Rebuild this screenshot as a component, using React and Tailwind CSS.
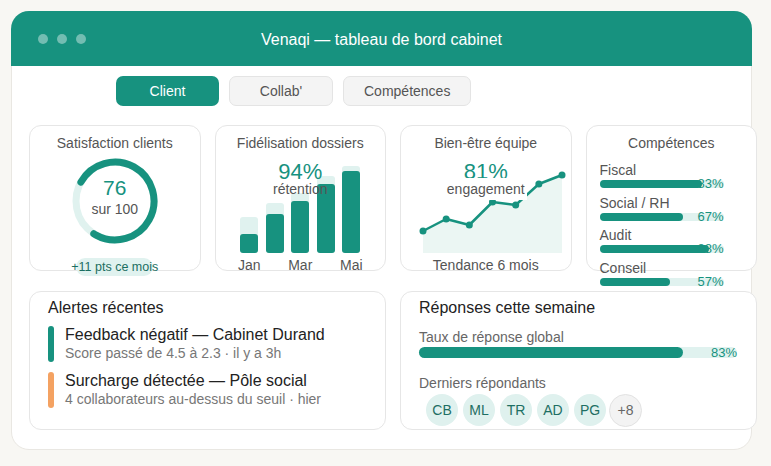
import React from 'react';

const bars = [
  { track: 36, fill: 19 },
  { track: 50, fill: 39 },
  { track: 60, fill: 52 },
  { track: 77, fill: 69 },
  { track: 87, fill: 82 },
];
const months = ['Jan', '', 'Mar', '', 'Mai'];
const skills = [
  ['Fiscal', 83],
  ['Social / RH', 67],
  ['Audit', 88],
  ['Conseil', 57],
];
const trend = [80, 68, 74, 51, 54, 33, 24];
const people = ['CB', 'ML', 'TR', 'AD', 'PG'];

const card = 'relative rounded-[12px] border border-[#e6e6e6] bg-white';
const title = 'h-[16px] shrink-0 text-[14px] leading-[16px] text-[#555] whitespace-nowrap';

function Donut() {
  const r = 39;
  const c = 2 * Math.PI * r;
  return (
    <div className="relative mt-[7px] h-[86px] w-[86px] shrink-0">
      <svg width="86" height="86" viewBox="0 0 86 86">
        <circle cx="43" cy="43" r={r} fill="none" stroke="#e0f2ef" strokeWidth="7" />
        <circle
          cx="43"
          cy="43"
          r={r}
          fill="none"
          stroke="#17927f"
          strokeWidth="7"
          strokeLinecap="round"
          strokeDasharray={`${c * 0.76} ${c}`}
          transform="rotate(209 43 43)"
        />
      </svg>
      <div className="absolute inset-x-0 top-[19px] flex flex-col items-center">
        <span className="text-[21px] leading-[22px] text-[#17927f]">76</span>
        <span className="text-[14px] leading-[20px] text-[#555]">sur 100</span>
      </div>
    </div>
  );
}

function Trend() {
  const xs = trend.map((_, i) => 22 + i * 23.17);
  const pts = trend.map((y, i) => `${xs[i]},${y}`).join(' ');
  const area = `${xs[0]},102 ${pts} ${xs[xs.length - 1]},102`;
  return (
    <svg width="169" height="104" viewBox="0 0 169 104" className="shrink-0 self-start">
      <polygon points={area} fill="#ebf6f3" />
      <polyline points={pts} fill="none" stroke="#17927f" strokeWidth="2.5" strokeLinejoin="round" />
      {trend.map((y, i) => (
        <circle key={i} cx={xs[i]} cy={y} r="3.5" fill="#17927f" />
      ))}
    </svg>
  );
}

export default function App() {
  return (
    <div className="min-h-screen bg-[#f8f7f3] pl-[11px] pt-[11px] font-['Liberation_Sans',Arial,sans-serif]">
      <div className="h-[439px] w-[741px] rounded-[18px] border border-[#e9e7e2] bg-white">
        <header className="-mx-px -mt-px grid h-[55px] grid-cols-[1fr_auto_1fr] items-center rounded-t-[18px] bg-[#17927f] px-[27px]">
          <div className="flex gap-[9px]">
            <span className="h-[10px] w-[10px] rounded-full bg-white/40" />
            <span className="h-[10px] w-[10px] rounded-full bg-white/40" />
            <span className="h-[10px] w-[10px] rounded-full bg-white/40" />
          </div>
          <h1 className="pt-[2px] text-[16px] text-white">Venaqi — tableau de bord cabinet</h1>
          <div />
        </header>

        <div className="pl-[17px]">
          <nav className="ml-[87px] mt-[10px] flex gap-[10px] text-[14px]">
            <button className="h-[30px] min-w-[103px] rounded-[7px] bg-[#17927f] px-5 text-white">Client</button>
            <button className="h-[30px] min-w-[104px] rounded-[7px] border border-[#e4e4e4] bg-[#f4f4f4] px-5 text-[#555]">Collab'</button>
            <button className="h-[30px] min-w-[103px] rounded-[7px] border border-[#e4e4e4] bg-[#f4f4f4] px-5 text-[#555]">Compétences</button>
          </nav>

          <div className="mt-[19px] grid w-[728px] grid-cols-4 gap-[14px]">
            <div className={`${card} flex h-[146px] flex-col items-center pt-[9px]`}>
              <div className={title}>Satisfaction clients</div>
              <Donut />
              <div className="mt-[14px] flex h-[18px] w-[77px] shrink-0 items-center justify-center rounded-full bg-[#e0f2ef]">
                <span className="whitespace-nowrap text-[12.5px] text-[#1b6e61]">+11 pts ce mois</span>
              </div>
            </div>

            <div className={`${card} flex h-[146px] flex-col items-center pt-[9px]`}>
              <div className={title}>Fidélisation dossiers</div>
              <div className="flex h-[102px] shrink-0 items-end gap-[7.5px]">
                {bars.map((b, i) => (
                  <div key={i} className="relative w-[18px] rounded-[3px] bg-[#e0f2ef]" style={{ height: b.track }}>
                    <div className="absolute inset-x-0 bottom-0 rounded-[3px] bg-[#17927f]" style={{ height: b.fill }} />
                  </div>
                ))}
              </div>
              <div className="mt-[4px] flex gap-[7.5px]">
                {months.map((m, i) => (
                  <div key={i} className="flex w-[18px] justify-center">
                    <span className="whitespace-nowrap text-[14px] leading-[16px] text-[#555]">{m}</span>
                  </div>
                ))}
              </div>
              <div className="absolute inset-x-0 top-[33px] flex flex-col items-center">
                <span className="text-[22px] leading-[25px] text-[#17927f]">94%</span>
                <span className="-mt-[3px] text-[14px] leading-[16px] text-[#555]">rétention</span>
              </div>
            </div>

            <div className={`${card} flex h-[146px] flex-col items-center pt-[9px]`}>
              <div className={title}>Bien-être équipe</div>
              <Trend />
              <div className={`${title} mt-[2px]`}>Tendance 6 mois</div>
              <div className="absolute inset-x-0 top-[33px] flex flex-col items-center">
                <span className="text-[22px] leading-[25px] text-[#17927f]">81%</span>
                <span className="-mt-[6px] bg-white px-[2px] text-[14px] leading-[22px] text-[#555]">engagement</span>
              </div>
            </div>

            <div className={`${card} flex h-[146px] flex-col pt-[9px]`}>
              <div className={`${title} text-center`}>Compétences</div>
              <div className="mt-[11px] flex flex-col gap-[6.5px] pl-[13px]">
                {skills.map(([name, pct]) => (
                  <div key={name}>
                    <div className="text-[14px] leading-[16px] text-[#555]">{name}</div>
                    <div className="relative mt-[2px] h-[8px] w-[124px] rounded-full bg-[#e0f2ef]">
                      <span className="absolute right-0 top-1/2 -translate-y-1/2 text-[13px] leading-[16px] text-[#17927f]">{pct}%</span>
                      <div className="absolute inset-y-0 left-0 rounded-full bg-[#17927f]" style={{ width: `${pct}%` }} />
                    </div>
                  </div>
                ))}
              </div>
            </div>
          </div>

          <div className="mt-[20px] grid w-[728px] grid-cols-2 gap-[14px]">
            <div className={`${card} h-[139px] pl-[18px] pt-[6px]`}>
              <div className="text-[16px] leading-[20px] text-[#222]">Alertes récentes</div>
              <div className="mt-[8px] flex flex-col gap-[10px]">
                <div className="flex gap-[11px]">
                  <div className="w-[6px] rounded-full bg-[#17927f]" />
                  <div>
                    <div className="text-[16px] leading-[18px] text-[#222]">Feedback négatif — Cabinet Durand</div>
                    <div className="text-[14px] leading-[18px] text-[#777]">Score passé de 4.5 à 2.3 · il y a 3h</div>
                  </div>
                </div>
                <div className="flex gap-[11px]">
                  <div className="w-[6px] rounded-full bg-[#f4a262]" />
                  <div>
                    <div className="text-[16px] leading-[18px] text-[#222]">Surcharge détectée — Pôle social</div>
                    <div className="text-[14px] leading-[18px] text-[#777]">4 collaborateurs au-dessus du seuil · hier</div>
                  </div>
                </div>
              </div>
            </div>

            <div className={`${card} h-[139px] pl-[18px] pt-[6px]`}>
              <div className="text-[16px] leading-[20px] text-[#222]">Réponses cette semaine</div>
              <div className="mt-[11px] text-[14px] leading-[16px] text-[#666]">Taux de réponse global</div>
              <div className="relative mt-[2px] h-[11px] w-[318px] rounded-full bg-[#e0f2ef]">
                <div className="absolute inset-y-0 left-0 w-[83%] rounded-full bg-[#17927f]" />
                <span className="absolute right-0 top-1/2 -translate-y-1/2 text-[13px] leading-[16px] text-[#17927f]">83%</span>
              </div>
              <div className="mt-[17px] text-[14px] leading-[16px] text-[#666]">Derniers répondants</div>
              <div className="mt-[3px] flex gap-[5px] pl-[7px]">
                {people.map((p) => (
                  <div key={p} className="flex h-[32px] w-[32px] items-center justify-center rounded-full bg-[#dff1ee] text-[14px] text-[#1e6f63]">
                    {p}
                  </div>
                ))}
                <div className="-ml-[2px] flex h-[33px] w-[33px] items-center justify-center rounded-full border border-[#e2e2e2] bg-[#f3f3f3] text-[14px] text-[#666]">
                  +8
                </div>
              </div>
            </div>
          </div>
        </div>
      </div>
    </div>
  );
}
